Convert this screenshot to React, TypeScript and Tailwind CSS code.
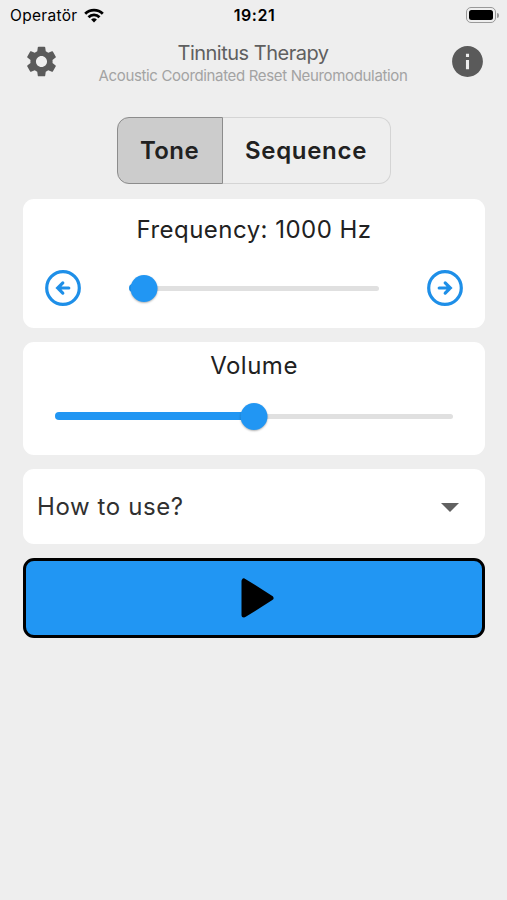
import { useState } from "react";
import { MdInfo, MdSettings } from "react-icons/md";

function StatusBar() {
    return (
        <div className="flex h-[30px] items-center justify-between pl-2.5 pr-2 text-black">
            <div className="flex w-[200px] items-center gap-[7px]">
                <span className="pt-px text-[15.5px] leading-[30px] tracking-[0.3px]">
                    Operatör
                </span>
                <svg viewBox="0 0 20 15" className="h-[15px] w-5">
                    <g fill="none" stroke="currentColor" strokeWidth="2.8">
                        <path d="M1.2 5.7a12.5 12.5 0 0 1 17.6 0" />
                        <path d="M4.5 9.2a7.8 7.8 0 0 1 11 0" />
                    </g>
                    <path d="M10 14.4 7.1 11.6a4.2 4.2 0 0 1 5.8 0z" />
                </svg>
            </div>
            <span className="text-[16px] font-semibold leading-[30px] tracking-[0.5px]">
                19:21
            </span>
            <div className="flex w-[200px] items-center justify-end">
                <div className="h-4 w-[30px] rounded-[5px] border border-[#999] p-[2px]">
                    <div className="h-full w-full rounded-[2.5px] bg-black" />
                </div>
                <div className="ml-px h-[5px] w-[2px] rounded-r-full bg-[#999]" />
            </div>
        </div>
    );
}

function Header() {
    return (
        <div className="flex h-[64px] items-center justify-between pl-[23px] pr-[21px]">
            <button aria-label="Settings" className="pb-0.5">
                <MdSettings className="h-[37px] w-[37px] text-[#5a5a5a]" />
            </button>
            <div className="flex flex-col items-center whitespace-nowrap pr-[3px] pt-[3px]">
                <h1 className="text-[20px] leading-6 tracking-[-0.5px] text-[#5f5f5f]">
                    Tinnitus Therapy
                </h1>
                <p className="text-[15px] leading-[22px] tracking-[-0.34px] text-[#a3a3a3]">
                    Acoustic Coordinated Reset Neuromodulation
                </p>
            </div>
            <button aria-label="Info" className="pb-0.5">
                <MdInfo className="h-[37px] w-[37px] text-[#5a5a5a]" />
            </button>
        </div>
    );
}

function Slider({ value, label }: { value: number; label: string }) {
    return (
        <div
            role="slider"
            aria-label={label}
            aria-valuenow={value}
            className="relative flex h-7 w-full items-center"
        >
            <div className="h-[5px] w-full rounded-full bg-[#e0e0e0]" />
            <div
                className="absolute left-0 h-2 rounded-full bg-[#2196f3]"
                style={{ width: `${value}%` }}
            />
            <div
                className="absolute h-[27px] w-[27px] -translate-x-1/2 rounded-full bg-[#2196f3] shadow-[0_1px_2px_rgba(0,0,0,0.3)]"
                style={{ left: `${value}%` }}
            />
        </div>
    );
}

function StepButton({ label, back }: { label: string; back?: boolean }) {
    return (
        <button aria-label={label}>
            <svg
                viewBox="0 0 36 36"
                className={`h-9 w-9 text-[#1e8fe8] ${back ? "-scale-x-100" : ""}`}
                fill="none"
                stroke="currentColor"
                strokeWidth="3.2"
            >
                <circle cx="18" cy="18" r="16.3" />
                <path
                    d="M12.2 18h11M18.2 12.9l5.1 5.1-5.1 5.1"
                    strokeLinecap="round"
                />
            </svg>
        </button>
    );
}

export default function App() {
    const [mode, setMode] = useState("tone");

    return (
        <div className="h-[900px] w-[507px] overflow-hidden bg-[#eeeeee] font-['Inter','Liberation_Sans',sans-serif] text-[#212121]">
            <StatusBar />
            <Header />

            <div className="mt-[23px] flex justify-center">
                <div className="flex h-[67px] w-[274px] text-[24px] font-semibold">
                    <button
                        onClick={() => setMode("tone")}
                        className={`w-[106px] rounded-l-xl border tracking-[0.4px] ${
                            mode === "tone"
                                ? "border-[#8c8c8c] bg-[#cccccc]"
                                : "border-[#d4d4d4]"
                        }`}
                    >
                        Tone
                    </button>
                    <button
                        onClick={() => setMode("sequence")}
                        className={`flex-1 rounded-r-xl border tracking-[0.7px] ${
                            mode === "sequence"
                                ? "border-[#8c8c8c] bg-[#cccccc]"
                                : "border-[#d4d4d4] border-l-0"
                        }`}
                    >
                        Sequence
                    </button>
                </div>
            </div>

            <main className="mt-[15px] flex flex-col gap-3.5 pl-[23px] pr-[22px]">
                <section className="h-[129px] rounded-[11px] bg-white px-[22px] pt-[15px]">
                    <h2 className="text-center text-[24px] leading-8 tracking-[0.47px]">
                        Frequency: 1000 Hz
                    </h2>
                    <div className="mt-6 flex items-center justify-between">
                        <StepButton label="Decrease frequency" back />
                        <div className="w-[250px]">
                            <Slider value={5.9} label="Frequency" />
                        </div>
                        <StepButton label="Increase frequency" />
                    </div>
                </section>

                <section className="h-[113px] rounded-[11px] bg-white px-8 pt-2">
                    <h2 className="text-center text-[24px] leading-8 tracking-[0.5px]">
                        Volume
                    </h2>
                    <div className="mt-5">
                        <Slider value={50} label="Volume" />
                    </div>
                </section>

                <button className="flex h-[75px] items-center justify-between rounded-[11px] bg-white pl-3.5 pr-[26px] pt-px text-[24px] tracking-[0.6px] text-[#303030]">
                    How to use?
                    <svg viewBox="0 0 18 9" className="h-[9px] w-[18px]">
                        <path d="M0 0h18L9 9z" fill="#616161" />
                    </svg>
                </button>

                <button
                    aria-label="Play"
                    className="flex h-20 items-center justify-center rounded-[11px] border-3 border-black bg-[#2196f3]"
                >
                    <svg viewBox="0 0 34 40" className="ml-[7px] h-10 w-[34px]">
                        <path
                            d="M3 3v34l27-17z"
                            fill="#000"
                            stroke="#000"
                            strokeWidth="5"
                            strokeLinejoin="round"
                        />
                    </svg>
                </button>
            </main>
        </div>
    );
}
